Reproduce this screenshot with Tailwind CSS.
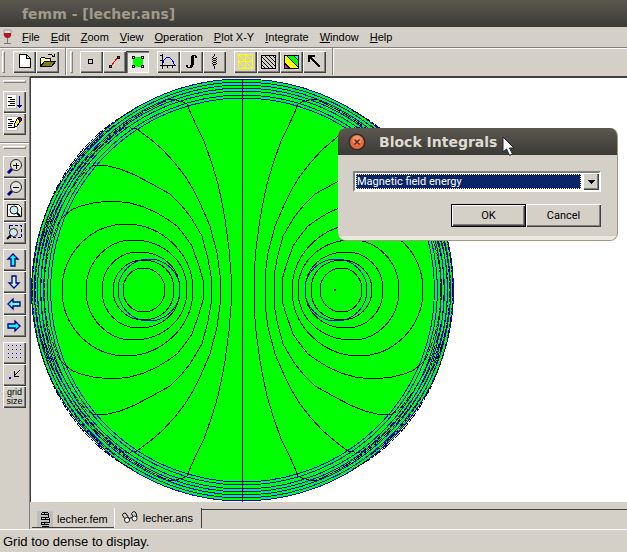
<!DOCTYPE html>
<html lang="en">
<head>
<meta charset="utf-8">
<title>femm - [lecher.ans]</title>
<script src="https://cdn.jsdelivr.net/npm/@tailwindcss/browser@4"></script>
</head>
<body class="relative flex h-screen flex-col overflow-hidden bg-[#d4d0c8] font-['Liberation_Sans',Arial,sans-serif] text-[11px] text-black">

<header class="flex h-[27px] shrink-0 items-center bg-linear-to-b from-[#5b5850] to-[#3b3a35] pl-[22px] font-['DejaVu_Sans',sans-serif] text-sm font-bold text-[#a09a8c]">
  <h1>femm - [lecher.ans]</h1>
</header>

<nav class="flex h-5 shrink-0 items-center gap-[11px] pl-[2px]" aria-label="Main menu">
  <svg class="-mr-[2px] h-4 w-[11px]" viewBox="0 0 11 16" aria-hidden="true"><path d="M2 1h7v5q-.5 3-3.500 3T2 6z" fill="#ddd" stroke="#999"/><path d="M2 4h7v2q-.5 3-3.500 3T2 6z" fill="#b81420"/><path d="M5 9h1v5h3v1H2v-1h3z" fill="#777"/></svg>
  <button><u>F</u>ile</button>
  <button><u>E</u>dit</button>
  <button><u>Z</u>oom</button>
  <button><u>V</u>iew</button>
  <button><u>O</u>peration</button>
  <button><u>P</u>lot X-Y</button>
  <button><u>I</u>ntegrate</button>
  <button><u>W</u>indow</button>
  <button><u>H</u>elp</button>
</nav>

<div class="flex h-[29px] shrink-0 items-center border-t border-[#808080] pb-px shadow-[inset_0_1px_#fff]" role="toolbar" aria-label="Tools">
  <span class="ml-[2px] h-[22px] w-[3px] border border-[#808080] border-t-white border-l-white"></span>
  <div class="ml-2 flex">
    <button aria-label="New" class="h-[22px] w-[23px] shadow-[inset_1px_1px_#fff,inset_-1px_-1px_#404040,inset_-2px_-2px_#808080]"><svg class="block" width="23" height="22" shape-rendering="crispEdges"><path d="M6.500 3.500h7l4 4v9h-11zM13.500 3.500v4h4" fill="#fff" stroke="#000"/></svg></button>
    <button aria-label="Open" class="h-[22px] w-[23px] shadow-[inset_1px_1px_#fff,inset_-1px_-1px_#404040,inset_-2px_-2px_#808080]"><svg class="block" width="23" height="22" shape-rendering="crispEdges"><path d="M4.500 15.500v-8l1-1h3l1 1h5v3" fill="#ffff80" stroke="#000"/><path d="M4.500 15.500l4-5h11l-4 5z" fill="#808000" stroke="#000"/><path d="M11.500 4.500q3-3 6 1M18.500 2.500v3h-3" fill="none" stroke="#000"/></svg></button>
  </div>
  <span class="ml-[6px] h-[27px] w-[2px] border-l border-[#808080] bg-white"></span>
  <span class="ml-[3px] h-[22px] w-[3px] border border-[#808080] border-t-white border-l-white"></span>
  <div class="ml-[7px] flex">
    <button aria-label="Point mode" class="h-[22px] w-[23px] shadow-[inset_1px_1px_#fff,inset_-1px_-1px_#404040,inset_-2px_-2px_#808080]"><svg class="block" width="23" height="22" shape-rendering="crispEdges"><path d="M8.500 8.500h4v4h-4z" fill="none" stroke="#000"/></svg></button>
    <button aria-label="Contour mode" class="h-[22px] w-[23px] shadow-[inset_1px_1px_#fff,inset_-1px_-1px_#404040,inset_-2px_-2px_#808080]"><svg class="block" width="23" height="22" shape-rendering="crispEdges"><path d="M8 15L15 6" stroke="#f00"/><path d="M6 14h3v3H6zM14 5h3v3h-3z"/><path d="M7 15h1v1H7zM15 6h1v1h-1z" fill="#f00"/></svg></button>
    <button aria-label="Area mode" aria-pressed="true" class="h-[22px] w-[23px] bg-[#e9e7e3] shadow-[inset_1px_1px_#404040,inset_2px_2px_#808080,inset_-1px_-1px_#fff]"><svg class="block" width="23" height="22" shape-rendering="crispEdges"><path d="M7 6h10v10H7z" fill="#0f0"/><path d="M6 5h3v3H6zM15 5h3v3h-3zM6 14h3v3H6zM15 14h3v3h-3z"/><path d="M7 6h1v1H7zM16 6h1v1h-1zM7 15h1v1H7zM16 15h1v1h-1z" fill="#fff"/></svg></button>
  </div>
  <div class="ml-2 flex">
    <button aria-label="Plot" class="h-[22px] w-[23px] shadow-[inset_1px_1px_#fff,inset_-1px_-1px_#404040,inset_-2px_-2px_#808080]"><svg class="block" width="23" height="22" shape-rendering="crispEdges"><path d="M5.500 3v15M3 14.500h16M3 4.500h3M3 9.500h3M10.500 14v3M15.500 14v3" stroke="#000"/><path d="M6 11.500C8 5 14 4 17.500 14" fill="none" stroke="#00f"/></svg></button>
    <button aria-label="Line integral" class="h-[22px] w-[23px] shadow-[inset_1px_1px_#fff,inset_-1px_-1px_#404040,inset_-2px_-2px_#808080]"><svg class="block" width="23" height="22" shape-rendering="crispEdges"><path d="M12 4h4v1h1v2h-2V5h-1v9h-1v2h-1v1H7v-1H6v-2h2v2h2v-2h1V5h1z"/></svg></button>
    <button aria-label="Circuit properties" class="h-[22px] w-[23px] shadow-[inset_1px_1px_#fff,inset_-1px_-1px_#404040,inset_-2px_-2px_#808080]"><svg class="block" width="23" height="22" shape-rendering="crispEdges"><path d="M11 3h1v2h-1zM10 5h1v1h-1zM9 6h1v1H9zM10 7h3v1h-3zM13 6h1v1h-1zM9 8h1v1H9zM10 9h3v1h-3zM13 8h1v1h-1zM9 10h1v1H9zM10 11h3v1h-3zM13 10h1v1h-1zM9 12h1v1H9zM10 13h3v1h-3zM13 12h1v1h-1zM10 14h1v1h-1zM11 15h1v3h-1z"/></svg></button>
  </div>
  <div class="ml-2 flex">
    <button aria-label="Show mesh" class="h-[22px] w-[23px] shadow-[inset_1px_1px_#fff,inset_-1px_-1px_#404040,inset_-2px_-2px_#808080]"><svg class="block" width="23" height="22" shape-rendering="crispEdges"><path d="M4.500 3.500h14v14h-14zM11.500 3v15M4 10.500h15" fill="none" stroke="#ff0"/><path d="M5 4l13 13M5 11l6 6M12 4l6 6" fill="none" stroke="#ff0"/></svg></button>
    <button aria-label="Contour plot" class="h-[22px] w-[23px] shadow-[inset_1px_1px_#fff,inset_-1px_-1px_#404040,inset_-2px_-2px_#808080]"><svg class="block" width="23" height="22" shape-rendering="crispEdges"><path d="M4.500 4.500h14v13h-14zM5 14l3.500 3.500M5 10l7.500 7.500M5 6l11.500 11.500M7 4l11.500 11.500M11 4l7.500 7.500M15 4l3.500 3.500" fill="none" stroke="#000"/></svg></button>
    <button aria-label="Density plot" class="h-[22px] w-[23px] shadow-[inset_1px_1px_#fff,inset_-1px_-1px_#404040,inset_-2px_-2px_#808080]"><svg class="block" width="23" height="22" shape-rendering="crispEdges"><path d="M4 4h15v14H4z" fill="#ff0"/><path d="M6 4h7l6 6v7z" fill="#0f0"/><path d="M13 4h6v6z" fill="#0ff"/><path d="M4 12l6 6H4z" fill="#f0f"/><path d="M4.500 4.500h14v13h-14zM4.500 12l6 6M6 4l13 13M13 4l6 6" fill="none" stroke="#000"/></svg></button>
    <button aria-label="Vector plot" class="h-[22px] w-[23px] shadow-[inset_1px_1px_#fff,inset_-1px_-1px_#404040,inset_-2px_-2px_#808080]"><svg class="block" width="23" height="22" shape-rendering="crispEdges"><path d="M7 6l10 10" stroke="#000" stroke-width="2"/><path d="M5 4h7v2H9l-2 2v3H5z"/></svg></button>
  </div>
  <span class="ml-[6px] h-[27px] w-[2px] border-l border-[#808080] bg-white"></span>
</div>

<div class="flex min-h-0 flex-1">
  <aside class="flex w-[30px] shrink-0 flex-col border-t border-r border-[#808080] pl-[3px]" role="toolbar" aria-label="View">
    <span class="mt-[3px] h-[3px] w-[23px] border border-[#808080] border-t-white border-l-white"></span>
    <div class="mt-2 flex flex-col">
      <button aria-label="Output window" class="h-[22px] w-[23px] shadow-[inset_1px_1px_#fff,inset_-1px_-1px_#404040,inset_-2px_-2px_#808080]"><svg class="block" width="23" height="22" shape-rendering="crispEdges"><path d="M3.500 3.500h10v14h-10z" fill="#fff" stroke="#bbb"/><path d="M5 6.500h4M7 8.500h5M5 10.500h7M7 12.500h5M5 14.500h7" stroke="#000"/><path d="M16 5h1v12h-1zM14 14h5v1h-5zM15 15h3v1h-3z" fill="#000080"/></svg></button>
      <button aria-label="Edit notes" class="h-[22px] w-[23px] shadow-[inset_1px_1px_#fff,inset_-1px_-1px_#404040,inset_-2px_-2px_#808080]"><svg class="block" width="23" height="22" shape-rendering="crispEdges"><path d="M3.500 3.500h11v14h-11z" fill="#fff" stroke="#bbb"/><path d="M5 6.500h4M7 8.500h4M5 10.500h5M5 12.500h4M5 14.500h7" stroke="#000"/><path d="M11.500 14.500v-4l3-5 3 2-3 5z" fill="#ff0" stroke="#000"/><path d="M14.500 5.500l1-1h2l1 1v2l-1 1z" fill="#800000" stroke="#000"/></svg></button>
    </div>
    <hr class="mt-[7px] -ml-[3px] border-t border-[#808080] shadow-[0_1px_#fff]">
    <span class="mt-[3px] h-[3px] w-[23px] border border-[#808080] border-t-white border-l-white"></span>
    <div class="mt-[7px] flex flex-col">
      <button aria-label="Zoom in" class="h-[22px] w-[23px] shadow-[inset_1px_1px_#fff,inset_-1px_-1px_#404040,inset_-2px_-2px_#808080]"><svg class="block" width="23" height="22"><path d="M5 17l4-4" stroke="#000080" stroke-width="3"/><circle cx="13" cy="9" r="5.500" fill="#e4e2dd" stroke="#222"/><path d="M10 9.500h6M13 6.500v6" stroke="#000" shape-rendering="crispEdges"/></svg></button>
      <button aria-label="Zoom out" class="h-[22px] w-[23px] shadow-[inset_1px_1px_#fff,inset_-1px_-1px_#404040,inset_-2px_-2px_#808080]"><svg class="block" width="23" height="22"><path d="M5 17l4-4" stroke="#000080" stroke-width="3"/><circle cx="13" cy="9" r="5.500" fill="#e4e2dd" stroke="#222"/><path d="M10 9.500h6" stroke="#000" shape-rendering="crispEdges"/></svg></button>
      <button aria-label="Zoom to page" class="h-[22px] w-[23px] shadow-[inset_1px_1px_#fff,inset_-1px_-1px_#404040,inset_-2px_-2px_#808080]"><svg class="block" width="23" height="22"><path d="M4.500 4.500h11l3 3v9h-14z" fill="#fff" stroke="#111"/><circle cx="11" cy="10" r="4" fill="#c8eeee" stroke="#222"/><path d="M14 13l3 3" stroke="#000" stroke-width="2"/></svg></button>
      <button aria-label="Zoom window" class="h-[22px] w-[23px] shadow-[inset_1px_1px_#fff,inset_-1px_-1px_#404040,inset_-2px_-2px_#808080]"><svg class="block" width="23" height="22"><path d="M6.500 3.500h12v12h-12z" fill="none" stroke="#000080" stroke-dasharray="3 2" shape-rendering="crispEdges"/><circle cx="10.500" cy="10.500" r="4" fill="#c8eeee" stroke="#222"/><path d="M4 17l4-4" stroke="#000" stroke-width="2"/></svg></button>
    </div>
    <div class="mt-[5px] flex flex-col">
      <button aria-label="Pan up" class="h-[22px] w-[23px] shadow-[inset_1px_1px_#fff,inset_-1px_-1px_#404040,inset_-2px_-2px_#808080]"><svg class="block" width="23" height="22"><path d="M10 5l5 5h-3v7H8v-7H5z" fill="#0ff" stroke="#000080" stroke-width="1.300"/></svg></button>
      <button aria-label="Pan down" class="h-[22px] w-[23px] shadow-[inset_1px_1px_#fff,inset_-1px_-1px_#404040,inset_-2px_-2px_#808080]"><svg class="block" width="23" height="22"><path d="M11 17l5-5h-3V5H9v7H6z" fill="#c8f4ff" stroke="#000080" stroke-width="1.300"/></svg></button>
      <button aria-label="Pan left" class="h-[22px] w-[23px] shadow-[inset_1px_1px_#fff,inset_-1px_-1px_#404040,inset_-2px_-2px_#808080]"><svg class="block" width="23" height="22"><path d="M5 11l5-5v3h7v4h-7v3z" fill="#6ff" stroke="#000080" stroke-width="1.300"/></svg></button>
      <button aria-label="Pan right" class="h-[22px] w-[23px] shadow-[inset_1px_1px_#fff,inset_-1px_-1px_#404040,inset_-2px_-2px_#808080]"><svg class="block" width="23" height="22"><path d="M17 11l-5-5v3H5v4h7v3z" fill="#0ff" stroke="#000080" stroke-width="1.300"/></svg></button>
    </div>
    <div class="mt-[5px] flex flex-col">
      <button aria-label="Show grid" class="h-[22px] w-[23px] shadow-[inset_1px_1px_#fff,inset_-1px_-1px_#404040,inset_-2px_-2px_#808080]"><svg class="block" width="23" height="22" shape-rendering="crispEdges"><path d="M5 3h1v1H5zM9 3h1v1H9zM13 3h1v1h-1zM17 3h1v1h-1zM5 7h1v1H5zM9 7h1v1H9zM13 7h1v1h-1zM17 7h1v1h-1zM5 11h1v1H5zM9 11h1v1H9zM13 11h1v1h-1zM17 11h1v1h-1zM5 15h1v1H5zM9 15h1v1H9zM13 15h1v1h-1zM17 15h1v1h-1z" fill="#00f"/></svg></button>
      <button aria-label="Snap to grid" class="h-[22px] w-[23px] shadow-[inset_1px_1px_#fff,inset_-1px_-1px_#404040,inset_-2px_-2px_#808080]"><svg class="block" width="23" height="22" shape-rendering="crispEdges"><path d="M17 6l-6 6M11.500 7v5.500H16" fill="none" stroke="#000"/><path d="M6 13h2v2H6z" fill="#00f"/></svg></button>
      <button class="flex h-[22px] w-[23px] flex-col items-center justify-center font-['Liberation_Sans',Arial,sans-serif] text-[9px] leading-[9px] shadow-[inset_1px_1px_#fff,inset_-1px_-1px_#404040,inset_-2px_-2px_#808080]"><span>grid</span><span>size</span></button>
    </div>
  </aside>

  <main class="flex min-w-0 flex-1 flex-col">
    <div class="min-h-0 flex-1 border-t-2 border-l border-[#404040] bg-white">
      <svg class="block h-full w-full" viewBox="31 78 596 424" preserveAspectRatio="xMinYMin meet" fill="none" stroke="#000" shape-rendering="crispEdges" role="img" aria-label="Magnetic field contour plot">
        <circle cx="242.500" cy="290" r="211" fill="#0f0" stroke="#00f"/>
        <path d="M242.500 79V501"/>
        <g id="upper-left">
          <path d="M187 104L191 114L197 127L204 141L212 164L218 184L222 203L225 219L229 249L231 274V290"/>
          <path d="M137 129L149 138L162 149L174 162L185 176L193 189L200 203L210 226L217 253L220 275V290"/>
          <path d="M95 165L108 166L120 169L135 175L150 183L161 189L170 194L181 205L190 216L202 236L208 259L211 276V290"/>
          <path d="M60 220L66 214L73 209L81 206L93 203L110 201L122 202L130 203L144 207L157 213L167 219L177 226L185 236L192 246L199 266L203 280V290"/>
          <path d="M62 290C62 253 91 224 127 224C162 225 193 253 193 290"/>
          <path d="M86 290C86 261 108 240 133 240C162 240 187 260 187 290"/>
          <path d="M102 290C102 268 118 252 139 252C162 252 180 267 180 290"/>
          <path d="M113 290C113 273 127 260 143 260C161 260 174 272 174 290"/>
          <path d="M123 290C123 278 132 268 143 268C156 268 165 278 165 290"/>
          <g stroke-dasharray="7 2 3 1">
            <path d="M187 104L181 101L171 99C110 122 37 190 34 290"/>
            <path d="M137 129L125 127C85 155 38 215 37 290"/>
            <path d="M95 165L86 170C60 200 40 245 41 290"/>
            <path d="M60 220C50 240 44 265 44 290"/>
            <path d="M132 111C75 140 34 205 32 290"/>
            <path d="M115 125C70 155 36 220 35 290"/>
          </g>
        </g>
        <use href="#upper-left" transform="translate(485 0) scale(-1 1)"/>
        <use href="#upper-left" transform="translate(0 580) scale(1 -1)"/>
        <use href="#upper-left" transform="translate(485 580) scale(-1 -1)"/>
        <g stroke="#00f">
          <circle cx="242.500" cy="290" r="208"/><circle cx="242.500" cy="290" r="205"/><circle cx="242.500" cy="290" r="202"/><circle cx="242.500" cy="290" r="199"/><circle cx="242.500" cy="290" r="195"/><circle cx="242.500" cy="290" r="192"/>
          <circle cx="149" cy="290" r="31"/><circle cx="336" cy="290" r="31"/>
        </g>
        <path d="M334 290h2" stroke-width="2"/>
      </svg>
    </div>
    <div class="flex h-[27px] shrink-0 items-stretch pt-[7px] pb-px pl-[2px]" role="tablist">
      <button role="tab" aria-selected="false" class="flex items-end gap-1 border-b border-[#404040] pr-[6px] pl-[5px]">
        <svg width="16" height="16" shape-rendering="crispEdges" aria-hidden="true"><path d="M0 0h16v16H0z" fill="#bdbdbd"/><path d="M5 1.500h6M4 3.500h8M4 6.500h8M5 8.500h7M4 11.500h8M5 13.500h7M4.500 2v2M11.500 2v5M4.500 6v3M12.500 7v5M4.500 11v3M7.500 2v2M8.500 6v3M7.500 11v3M5 15.500h7" fill="none" stroke="#000"/></svg>
        <span>lecher.fem</span>
      </button>
      <button role="tab" aria-selected="true" class="-mt-px flex items-start gap-1 border-r border-l border-r-[#404040] border-l-white pt-[2px] pr-2 pl-[6px]">
        <svg width="18" height="16" aria-hidden="true"><path d="M4 9L1.500 5.500Q2 2 5 3.500L8 8.500M8 8.500l3-1M12 7L10.500 3.500Q13 0 15 3l1 4" fill="none" stroke="#000"/><circle cx="6" cy="10" r="2.500" fill="#fff" stroke="#222"/><circle cx="13.500" cy="8.500" r="2.500" fill="#fff" stroke="#222"/></svg>
        <span>lecher.ans</span>
      </button>
      <span class="flex-1 border-t border-[#404040]"></span>
    </div>
  </main>
</div>

<footer class="flex h-[23px] shrink-0 items-center border-t border-white pt-px pl-[3px] text-[13px]" role="status">Grid too dense to display.</footer>

<section class="absolute top-[128px] left-[338px] w-[280px] overflow-hidden rounded-lg border-r border-b border-[#a09880] bg-[#d4d0c8] font-[Roboto,sans-serif]" role="dialog" aria-labelledby="dialog-title">
  <div class="flex h-[27px] items-center gap-[13px] bg-linear-to-b from-[#5b5850] to-[#3b3a35] pl-[10px]">
    <button aria-label="Close"><svg class="block" width="18" height="18"><circle cx="9" cy="9" r="8.500" fill="#2c2b28"/><circle cx="9" cy="9" r="7" fill="#e8693c"/><circle cx="9" cy="7" r="4.500" fill="#f49268"/><path d="M6.500 6.500l5 5M11.500 6.500l-5 5" stroke="#4b2c20" stroke-width="1.500"/></svg></button>
    <h2 id="dialog-title" class="font-['DejaVu_Sans',sans-serif] text-sm font-bold text-[#dfdbd2]">Block Integrals</h2>
  </div>
  <form class="border-b-4 border-[#ece8e0] px-4 pt-4 pb-[9px]" onsubmit="return false">
    <div class="relative -ml-px h-[21px] border-2 border-t-[#808080] border-r-white border-b-white border-l-[#808080] bg-white p-px">
      <select aria-label="Integral type" class="block h-full w-[calc(100%-17px)] appearance-none border border-dotted border-[#ffe680] bg-[#0a246a] pl-0 text-[11px] leading-3 text-white"><option>Magnetic field energy</option></select>
      <span class="pointer-events-none absolute top-0 right-0 flex h-[17px] w-4 items-center justify-center bg-[#d4d0c8] shadow-[inset_1px_1px_#fff,inset_-1px_-1px_#404040,inset_-2px_-2px_#808080]"><svg width="7" height="4" shape-rendering="crispEdges"><path d="M0 0h7L3.500 4z"/></svg></span>
    </div>
    <div class="mt-3 flex justify-end">
      <button class="h-[23px] w-[75px] border border-black pt-[2px] shadow-[inset_1px_1px_#fff,inset_-1px_-1px_#404040,inset_-2px_-2px_#808080]">OK</button>
      <button class="h-[23px] w-[75px] pt-[2px] shadow-[inset_1px_1px_#fff,inset_-1px_-1px_#404040,inset_-2px_-2px_#808080]">Cancel</button>
    </div>
  </form>
</section>

<svg class="pointer-events-none absolute top-[136px] left-[502px]" width="14" height="21" aria-hidden="true"><path d="M1 1v15l3.500-3 3 6.500 3-1.500-3-6H12z" fill="#fff" stroke="#222"/></svg>
</body>
</html>
